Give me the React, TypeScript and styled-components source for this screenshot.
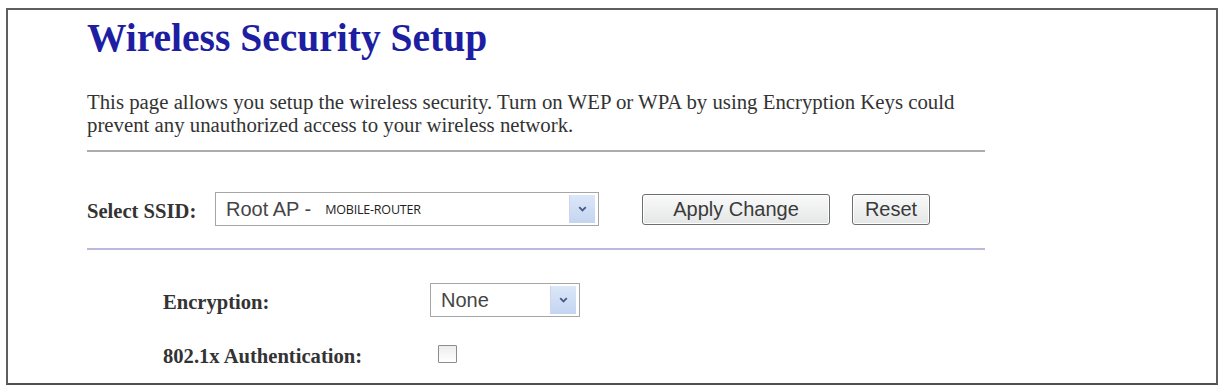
import React from "react";
import styled, { createGlobalStyle } from "styled-components";

const GlobalStyle = createGlobalStyle`
  html, body { margin: 0; padding: 0; background: #ffffff; }
  body { font-family: "Liberation Serif", "Times New Roman", serif; }
`;

const Frame = styled.div`
  box-sizing: border-box;
  margin: 8px 0 0 6px;
  width: 1212px;
  height: 377px;
  border: 2px solid #5e5e5e;
  border-bottom-color: #505050;
  padding-left: 79px;
  background: #ffffff;
`;

const Content = styled.div`
  width: 898px;
  display: flex;
  flex-direction: column;
`;

const Title = styled.h1`
  margin: 9px 0 0 0;
  font-family: "Liberation Serif", "Times New Roman", serif;
  font-size: 39.5px;
  line-height: 39px;
  font-weight: bold;
  color: #1e1ea2;
`;

const Intro = styled.p`
  margin: 32px 0 0 0;
  font-size: 20.8px;
  line-height: 23px;
  color: #333333;
`;

const Rule = styled.div<{ $tone: "grey" | "blue" }>`
  height: 0;
  border-top: 2px solid ${(p) => (p.$tone === "grey" ? "#acacac" : "#b9b9e2")};
`;

const SsidRow = styled.div`
  display: flex;
  align-items: center;
  height: 34px;
  margin: 40px 0 22px 0;
`;

const Label = styled.span<{ $width?: number }>`
  font-family: "Liberation Serif", "Times New Roman", serif;
  font-weight: bold;
  font-size: 20.6px;
  color: #333333;
  width: ${(p) => (p.$width ? `${p.$width}px` : "auto")};
  flex: none;
  padding-top: 4px;
`;

const SelectBox = styled.div<{ $width: number }>`
  box-sizing: border-box;
  display: flex;
  align-items: center;
  width: ${(p) => p.$width}px;
  height: 34px;
  border: 1px solid #a6a6a6;
  background: #ffffff;
  flex: none;
`;

const SelectText = styled.span`
  flex: 1;
  padding-left: 10px;
  font-family: "Liberation Sans", Arial, sans-serif;
  font-size: 20px;
  color: #454545;
  white-space: nowrap;
  display: flex;
  align-items: center;
`;

const SsidName = styled.span`
  font-family: "Open Sans", "Noto Sans", sans-serif;
  font-size: 12.5px;
  color: #222222;
  margin-left: 14px;
  letter-spacing: -0.2px;
`;

const ArrowBox = styled.span`
  box-sizing: border-box;
  width: 26px;
  height: 28px;
  margin-right: 3px;
  display: flex;
  align-items: center;
  justify-content: center;
  background: linear-gradient(#dce7f8, #c4d5f1);
  border-left: 1px solid #c9d6ee;
`;

const Button = styled.button<{ $width: number }>`
  box-sizing: border-box;
  width: ${(p) => p.$width}px;
  height: 31px;
  border: 1px solid #6e6e6e;
  border-radius: 3px;
  background: linear-gradient(#fafafa, #e4e6e6);
  box-shadow: inset 0 0 0 1px #ffffff;
  font-family: "Liberation Sans", Arial, sans-serif;
  font-size: 20px;
  color: #3a3a3a;
  padding: 0;
  flex: none;
`;

const Buttons = styled.div`
  display: flex;
  gap: 22px;
  margin-left: 43px;
`;

const Settings = styled.div`
  display: flex;
  flex-direction: column;
  padding-left: 76px;
  margin-top: 33px;
  gap: 20px;
`;

const SettingRow = styled.div`
  display: flex;
  align-items: center;
  height: 34px;
`;

const Check = styled.span`
  box-sizing: border-box;
  width: 19px;
  height: 18px;
  margin-left: 8px;
  border: 1px solid #8c8c8c;
  border-radius: 1px;
  background: linear-gradient(#ececec, #ffffff);
  flex: none;
`;

const Chevron = () => (
  <svg width="9" height="6" viewBox="0 0 9 6">
    <path d="M1.2 1.2 L4.5 4.5 L7.8 1.2" fill="none" stroke="#4a5a86" strokeWidth="1.8" />
  </svg>
);

export default function App() {
  return (
    <>
      <GlobalStyle />
      <Frame>
        <Content>
          <Title>Wireless Security Setup</Title>
          <Intro>
            This page allows you setup the wireless security. Turn on WEP or WPA by using Encryption Keys could
            <br />
            prevent any unauthorized access to your wireless network.
          </Intro>
          <Rule $tone="grey" style={{ marginTop: 14 }} />
          <SsidRow>
            <Label $width={128}>Select SSID:</Label>
            <SelectBox $width={384}>
              <SelectText>
                Root AP -<SsidName>MOBILE-ROUTER</SsidName>
              </SelectText>
              <ArrowBox>
                <Chevron />
              </ArrowBox>
            </SelectBox>
            <Buttons>
              <Button $width={188}>Apply Change</Button>
              <Button $width={78}>Reset</Button>
            </Buttons>
          </SsidRow>
          <Rule $tone="blue" />
          <Settings>
            <SettingRow>
              <Label $width={267}>Encryption:</Label>
              <SelectBox $width={150}>
                <SelectText>None</SelectText>
                <ArrowBox>
                  <Chevron />
                </ArrowBox>
              </SelectBox>
            </SettingRow>
            <SettingRow>
              <Label $width={267}>802.1x Authentication:</Label>
              <Check />
            </SettingRow>
          </Settings>
        </Content>
      </Frame>
    </>
  );
}
